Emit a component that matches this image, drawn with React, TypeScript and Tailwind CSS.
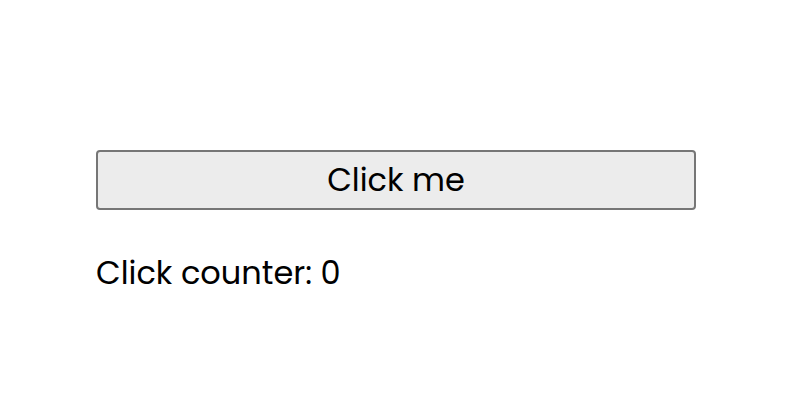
import React, { useState } from "react";

export default function App() {
  const [count, setCount] = useState(0);
  return (
    <div className="w-[796px] h-[420px] bg-white" style={{ fontFamily: "Poppins, Inter, sans-serif" }}>
      <div className="ml-[96px] w-[600px] pt-[150px] flex flex-col">
        <button
          onClick={() => setCount(count + 1)}
          className="w-full h-[60px] border-2 border-[#767676] rounded-[4px] bg-[#ececec] text-[32px] text-black leading-none"
        >
          Click me
        </button>
        <p className="mt-[43px] text-[32px] leading-[40px] text-black">Click counter: {count}</p>
      </div>
    </div>
  );
}
